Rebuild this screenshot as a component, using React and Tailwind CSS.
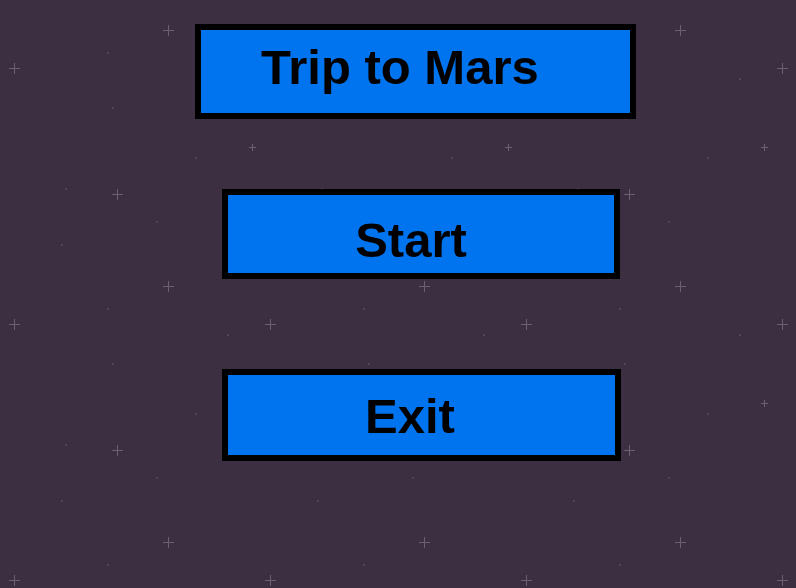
const crosses = [
  [168, 30, 5],
  [14, 68, 5],
  [117, 194, 5],
  [252, 147, 3],
]

const dots = [
  [107, 52],
  [112, 107],
  [227, 78],
  [195, 157],
  [65, 188],
  [156, 221],
  [61, 244],
]

const StarField = () => (
  <svg className="absolute inset-0 w-full h-full" aria-hidden="true">
    <defs>
      <pattern id="stars" width="256" height="256" patternUnits="userSpaceOnUse">
        {crosses.map(([x, y, r]) => (
          <g key={`${x}-${y}`} stroke="#6d5e72" strokeWidth="1">
            <line x1={x - r} y1={y + 0.5} x2={x + r + 1} y2={y + 0.5} />
            <line x1={x + 0.5} y1={y - r} x2={x + 0.5} y2={y + r + 1} />
          </g>
        ))}
        {dots.map(([x, y]) => (
          <rect key={`${x}-${y}`} x={x} y={y} width="2" height="2" fill="#51435a" />
        ))}
      </pattern>
    </defs>
    <rect width="100%" height="100%" fill="url(#stars)" />
  </svg>
)

const App = () => {
  return (
    <div className="relative w-full h-[588px] overflow-hidden bg-[#3c2f41] font-['Liberation_Sans',Arial,sans-serif]">
      <StarField />

      <div className="relative flex flex-col items-start">
        <div className="mt-[24px] ml-[195px] w-[441px] h-[95px] border-[6px] border-black bg-[#0074ef] flex items-center pl-[60px] pb-[8px]">
          <h1 className="text-[49px] leading-none font-bold text-black">Trip to Mars</h1>
        </div>

        <button className="mt-[70px] ml-[222px] w-[398px] h-[90px] border-[6px] border-black bg-[#0074ef] flex items-center justify-center pr-[20px] pt-[13px] text-[49px] leading-none font-bold text-black">
          Start
        </button>

        <button className="mt-[90px] ml-[222px] w-[399px] h-[92px] border-[6px] border-black bg-[#0074ef] flex items-center justify-center pr-[23px] pt-[2px] text-[49px] leading-none font-bold text-black">
          Exit
        </button>
      </div>
    </div>
  )
}

export default App
